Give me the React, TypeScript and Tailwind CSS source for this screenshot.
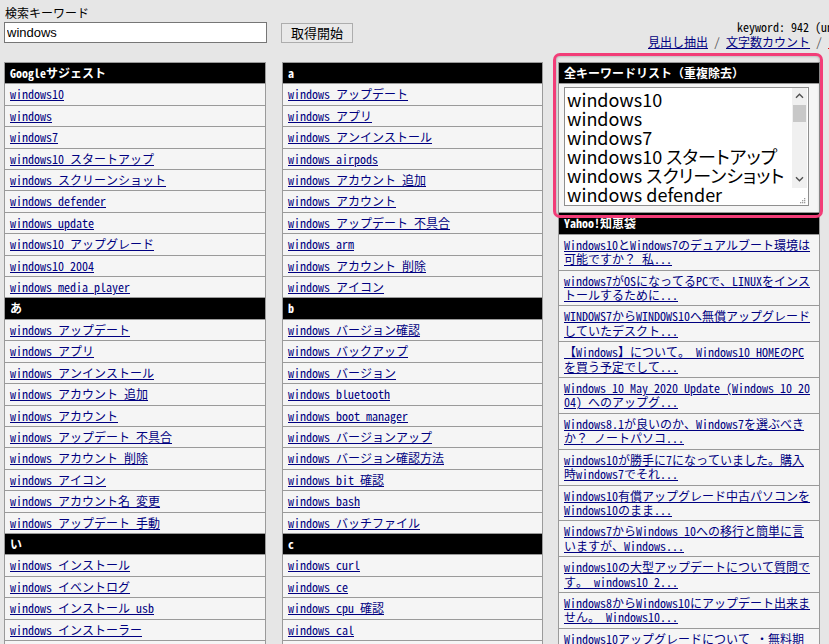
import React from "react";

type Item = { head?: boolean; text: string };

const google = [
  "windows10",
  "windows",
  "windows7",
  "windows10 スタートアップ",
  "windows スクリーンショット",
  "windows defender",
  "windows update",
  "windows10 アップグレード",
  "windows10 2004",
  "windows media player",
];

const aJp = [
  "windows アップデート",
  "windows アプリ",
  "windows アンインストール",
  "windows アカウント 追加",
  "windows アカウント",
  "windows アップデート 不具合",
  "windows アカウント 削除",
  "windows アイコン",
  "windows アカウント名 変更",
  "windows アップデート 手動",
];

const iJp = [
  "windows インストール",
  "windows イベントログ",
  "windows インストール usb",
  "windows インストーラー",
  "windows インターネット",
];

const aEn = [
  "windows アップデート",
  "windows アプリ",
  "windows アンインストール",
  "windows airpods",
  "windows アカウント 追加",
  "windows アカウント",
  "windows アップデート 不具合",
  "windows arm",
  "windows アカウント 削除",
  "windows アイコン",
];

const bEn = [
  "windows バージョン確認",
  "windows バックアップ",
  "windows バージョン",
  "windows bluetooth",
  "windows boot manager",
  "windows バージョンアップ",
  "windows バージョン確認方法",
  "windows bit 確認",
  "windows bash",
  "windows バッチファイル",
];

const cEn = ["windows curl", "windows ce", "windows cpu 確認", "windows cal", "windows cmd"];

const col1: Item[] = [
  { head: true, text: "Googleサジェスト" },
  ...google.map((t) => ({ text: t })),
  { head: true, text: "あ" },
  ...aJp.map((t) => ({ text: t })),
  { head: true, text: "い" },
  ...iJp.map((t) => ({ text: t })),
];

const col2: Item[] = [
  { head: true, text: "a" },
  ...aEn.map((t) => ({ text: t })),
  { head: true, text: "b" },
  ...bEn.map((t) => ({ text: t })),
  { head: true, text: "c" },
  ...cEn.map((t) => ({ text: t })),
];

const chiebukuro = [
  "Windows10とWindows7のデュアルブート環境は可能ですか？ 私...",
  "windows7がOSになってるPCで、LINUXをインストールするために...",
  "WINDOWS7からWINDOWS10へ無償アップグレードしていたデスクト...",
  "【Windows】について。 Windows10 HOMEのPCを買う予定でして...",
  "Windows 10 May 2020 Update (Windows 10 2004) へのアップグ...",
  "Windows8.1が良いのか、Windows7を選ぶべきか？ ノートパソコ...",
  "windows10が勝手に7になっていました。購入時windows7でそれ...",
  "Windows10有償アップグレード中古パソコンをWindows10のまま...",
  "Windows7からWindows 10への移行と簡単に言いますが、Windows...",
  "windows10の大型アップデートについて質問です。 windows10 2...",
  "Windows8からWindows10にアップデート出来ません。 Windows10...",
  "Windows10アップグレードについて ・無料期間はいつまで...",
];

const allKeywords = [...google, ...aEn, ...aJp, ...bEn, ...cEn, ...iJp].filter(
  (k, i, arr) => arr.indexOf(k) === i
);

function Column({ items }: { items: Item[] }) {
  return (
    <div className="border border-[#9a9a9a] bg-[#f5f5f5]">
      {items.map((it, i) =>
        it.head ? (
          <div
            key={i}
            className={`bg-black text-white font-bold px-[5px] py-[3px] leading-[14.4px] ${i > 0 ? "border-t border-[#9a9a9a]" : ""}`}
          >
            {it.text}
          </div>
        ) : (
          <div key={i} className="border-t border-[#9a9a9a] px-[5px] py-[3px] leading-[14.4px] whitespace-nowrap">
            <a href="#" className="text-[#000080] underline">
              {it.text}
            </a>
          </div>
        )
      )}
    </div>
  );
}

function Chevron({ down }: { down?: boolean }) {
  return (
    <svg width="9" height="6" viewBox="0 0 9 6" className="block">
      <path
        d={down ? "M1 1.2 L4.5 4.7 L8 1.2" : "M1 4.8 L4.5 1.3 L8 4.8"}
        fill="none"
        stroke="#505050"
        strokeWidth="1.4"
      />
    </svg>
  );
}

function KeywordBox() {
  return (
    <div className="flex w-[245px] h-[119px] bg-white border border-[#8f8f8f]">
      <textarea
        readOnly
        defaultValue={allKeywords.join("\n")}
        className="flex-1 min-w-0 h-full resize-none overflow-hidden bg-white pl-[2px] pt-[2px] text-[18px] leading-[19px] text-black font-['Noto_Sans_CJK_JP',sans-serif] [font-feature-settings:'palt'] outline-none"
      />
      <div className="w-[15px] mr-[1px] flex flex-col">
        <div className="h-[100px] bg-[#f0f0f0] flex flex-col">
          <div className="h-[17px] flex items-center justify-center">
            <Chevron />
          </div>
          <div className="h-[17px] bg-[#c8c8c8] mx-[1px]" />
          <div className="flex-1" />
          <div className="h-[17px] flex items-center justify-center">
            <Chevron down />
          </div>
        </div>
        <div className="flex-1 flex items-end justify-end pb-[1px] pr-[1px]">
          <svg width="7" height="7" viewBox="0 0 7 7" className="block">
            <rect x="5" y="1" width="1.3" height="1.3" fill="#9a9a9a" />
            <rect x="3" y="3" width="1.3" height="1.3" fill="#9a9a9a" />
            <rect x="5" y="3" width="1.3" height="1.3" fill="#9a9a9a" />
            <rect x="1" y="5" width="1.3" height="1.3" fill="#9a9a9a" />
            <rect x="3" y="5" width="1.3" height="1.3" fill="#9a9a9a" />
            <rect x="5" y="5" width="1.3" height="1.3" fill="#9a9a9a" />
          </svg>
        </div>
      </div>
    </div>
  );
}

export default function App() {
  return (
    <div className="relative w-[829px] h-[644px] overflow-hidden bg-[#e6e6e6] text-[12px] text-black font-['Noto_Sans_Mono_CJK_JP','Noto_Sans_CJK_JP',monospace]">
      {/* top bar */}
      <div className="flex items-start px-[4px] pt-[6px]">
        <div className="w-[644px] shrink-0">
          <div className="leading-[14px] pl-[1px]">検索キーワード</div>
          <div className="flex items-start mt-[2px]">
            <input
              readOnly
              value="windows"
              className="w-[263px] h-[21px] bg-white border border-[#767676] px-[2px] text-[13px] font-['Liberation_Sans',sans-serif] outline-none"
            />
            <button className="ml-[14px] mt-[1px] w-[72px] h-[20px] bg-[#e9e9e9] border border-[#adadad] text-[13px] leading-[18px] font-['Noto_Sans_CJK_JP',sans-serif]">
              取得開始
            </button>
          </div>
        </div>
        <div className="pt-[13px] whitespace-nowrap leading-[15px] h-[37px]">
          <div className="pl-[89px]">keyword: 942 (unique: 618)</div>
          <div>
            <a href="#" className="text-[#000080] underline">見出し抽出</a>
            <span className="text-[#555]"> / </span>
            <a href="#" className="text-[#000080] underline">文字数カウント</a>
            <span className="text-[#555]"> / </span>
            <a href="#" className="text-[#e00000] underline">ブックマーク</a>
          </div>
        </div>
      </div>

      {/* columns */}
      <div className="flex items-start px-[4px] mt-[19px]">
        <div className="w-[262px] shrink-0">
          <Column items={col1} />
        </div>
        <div className="w-[261px] shrink-0 ml-[16px]">
          <Column items={col2} />
        </div>
        <div className="w-[262px] shrink-0 ml-[15px] border border-[#9a9a9a] bg-[#f5f5f5]">
          <div className="bg-black text-white font-bold px-[5px] py-[3px] leading-[14.4px]">
            全キーワードリスト（重複除去）
          </div>
          <div className="border-t border-[#9a9a9a] pl-[5px] pt-[2.5px] pb-[6.5px]">
            <KeywordBox />
          </div>
          <div className="border-t border-[#9a9a9a] bg-black text-white font-bold px-[5px] py-[3px] leading-[14.4px]">
            Yahoo!知恵袋
          </div>
          {chiebukuro.map((t, i) => (
            <div key={i} className="border-t border-[#9a9a9a] px-[5px] py-[3px] leading-[14.4px] break-all">
              <a href="#" className="text-[#000080] underline">
                {t}
              </a>
            </div>
          ))}
        </div>
      </div>

      {/* highlight marker */}
      <div className="absolute left-[553px] top-[53px] w-[270px] h-[165px] border-[3px] border-[#f23d78] rounded-[7px] shadow-[inset_0_0_3px_rgba(0,0,0,0.35)] pointer-events-none" />
    </div>
  );
}
